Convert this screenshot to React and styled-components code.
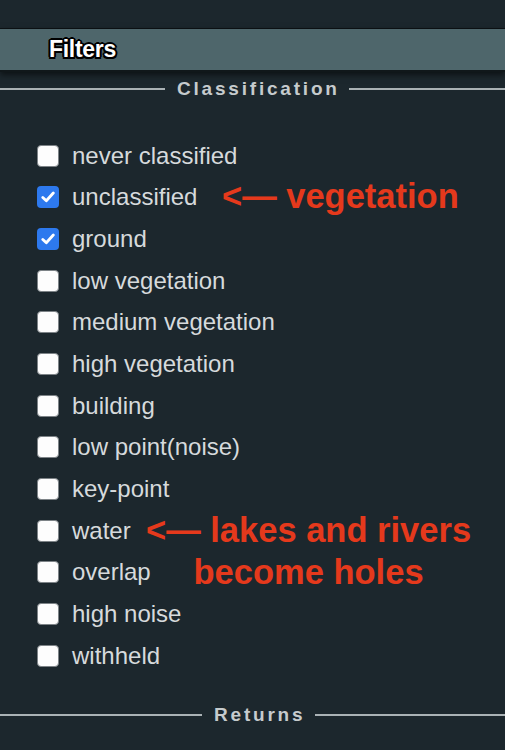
import React from "react";
import styled, { createGlobalStyle } from "styled-components";

const GlobalStyle = createGlobalStyle`
  html, body {
    margin: 0;
    padding: 0;
    background: #1c272d;
  }
  body {
    font-family: "Liberation Sans", Arial, Helvetica, sans-serif;
    overflow: hidden;
  }
`;

const classes = [
  { name: "never classified", checked: false },
  { name: "unclassified", checked: true, note: ["<— vegetation"], noteLeft: 185 },
  { name: "ground", checked: true },
  { name: "low vegetation", checked: false },
  { name: "medium vegetation", checked: false },
  { name: "high vegetation", checked: false },
  { name: "building", checked: false },
  { name: "low point(noise)", checked: false },
  { name: "key-point", checked: false },
  {
    name: "water",
    checked: false,
    note: ["<— lakes and rivers", "become holes"],
    noteLeft: 109,
  },
  { name: "overlap", checked: false },
  { name: "high noise", checked: false },
  { name: "withheld", checked: false },
];

const App = () => {
  return (
    <Page>
      <GlobalStyle />
      <Header>
        <Title>Filters</Title>
      </Header>
      <Legend>
        <Rule $w={165} />
        <LegendText>Classification</LegendText>
        <Rule />
      </Legend>
      <List>
        {classes.map((c) => (
          <Row key={c.name}>
            <Box $checked={c.checked}>
              {c.checked && (
                <svg width="14" height="12" viewBox="0 0 14 12">
                  <path
                    d="M1.8 6.4 L5.3 9.8 L12.3 2"
                    fill="none"
                    stroke="#fff"
                    strokeWidth="2.8"
                    strokeLinecap="round"
                    strokeLinejoin="round"
                  />
                </svg>
              )}
            </Box>
            <Label>{c.name}</Label>
            {c.note && (
              <Note $left={c.noteLeft}>
                {c.note.map((l) => (
                  <div key={l}>{l}</div>
                ))}
              </Note>
            )}
          </Row>
        ))}
      </List>
      <Legend $bottom>
        <Rule $w={202} />
        <LegendText>Returns</LegendText>
        <Rule />
      </Legend>
    </Page>
  );
};

export default App;

const Page = styled.div`
  width: 505px;
  height: 750px;
  padding-top: 28px;
  box-sizing: border-box;
  background: #1c272d;
`;

const Header = styled.div`
  height: 41px;
  border-top: 1px solid #0b1013;
  border-bottom: 2px solid #10171a;
  background: #4e666b;
  box-shadow: 0 3px 6px rgba(0, 0, 0, 0.55);
  display: flex;
  align-items: center;
  padding-left: 49px;
`;

const Title = styled.div`
  font-size: 23px;
  font-weight: bold;
  color: #fff;
  letter-spacing: -0.3px;
  text-shadow: -1.5px -1.5px 0 #000, 1.5px -1.5px 0 #000, -1.5px 1.5px 0 #000,
    1.5px 1.5px 0 #000, 0 2px 0 #000, 0 -2px 0 #000, 2px 0 0 #000,
    -2px 0 0 #000;
`;

const Legend = styled.div`
  display: flex;
  align-items: center;
  gap: 12px;
  height: 22px;
  margin-top: ${(p) => (p.$bottom ? "27px" : "6px")};
`;

const Rule = styled.div`
  height: 2px;
  background: #aab2b5;
  flex: ${(p) => (p.$w ? `0 0 ${p.$w}px` : "1")};
`;

const LegendText = styled.div`
  font-size: 19px;
  font-weight: bold;
  letter-spacing: 2.8px;
  color: #c6cbcd;
  margin-right: -2.8px;
`;

const List = styled.div`
  padding: 35px 0 0 37px;
  display: flex;
  flex-direction: column;
`;

const Row = styled.div`
  position: relative;
  height: 41.67px;
  display: flex;
  align-items: center;
  gap: 13px;
`;

const Box = styled.div`
  width: 22px;
  height: 22px;
  box-sizing: border-box;
  border-radius: 4px;
  display: flex;
  align-items: center;
  justify-content: center;
  background: ${(p) => (p.$checked ? "#2d79ee" : "#fdfdfd")};
  border: ${(p) => (p.$checked ? "none" : "1.5px solid #7d8387")};
`;

const Label = styled.div`
  font-size: 24px;
  color: #d6dadc;
`;

const Note = styled.div`
  position: absolute;
  left: ${(p) => p.$left}px;
  top: 50%;
  transform: translateY(-22px);
  font-size: 34.5px;
  line-height: 42px;
  font-weight: bold;
  color: #e5391c;
  text-align: center;
  white-space: nowrap;
`;
